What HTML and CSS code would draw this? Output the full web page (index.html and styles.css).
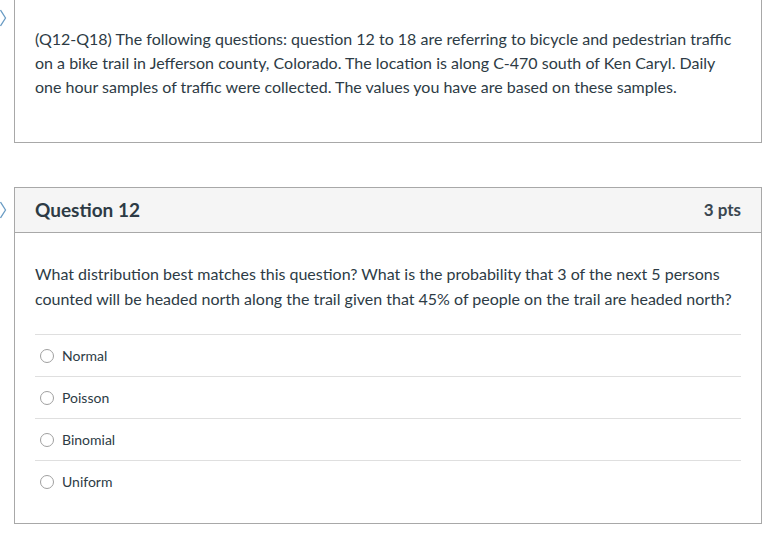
FILE: index.html
```html
<!DOCTYPE html>
<html>
<head>
<meta charset="utf-8">
<link rel="stylesheet" href="styles.css">
</head>
<body>
<div class="page">
  <div class="item">
    <svg class="chev chev-top" width="7" height="18" viewBox="0 0 7 18"><path d="M0.5 1 L5.5 9 L0.5 17" fill="none" stroke="#6a9cc4" stroke-width="1.3"/></svg>
    <div class="box box-intro">
      <p class="text">(Q12-Q18) The following questions: question 12 to 18 are referring to bicycle and pedestrian traffic on a bike trail in Jefferson county, Colorado. The location is along C-470 south of Ken Caryl. Daily one hour samples of traffic were collected. The values you have are based on these samples.</p>
    </div>
  </div>
  <div class="item item-q">
    <svg class="chev chev-q" width="7" height="18" viewBox="0 0 7 18"><path d="M0.5 1 L5.5 9 L0.5 17" fill="none" stroke="#6a9cc4" stroke-width="1.3"/></svg>
    <div class="box">
      <div class="header">
        <span class="qname">Question 12</span>
        <span class="pts">3 pts</span>
      </div>
      <div class="qbody">
        <p class="text qtext">What distribution best matches this question? What is the probability that 3 of the next 5 persons counted will be headed north along the trail given that 45% of people on the trail are headed north?</p>
        <div class="answers">
          <div class="answer"><span class="radio"></span><span class="label">Normal</span></div>
          <div class="answer"><span class="radio"></span><span class="label">Poisson</span></div>
          <div class="answer"><span class="radio"></span><span class="label">Binomial</span></div>
          <div class="answer"><span class="radio"></span><span class="label">Uniform</span></div>
        </div>
      </div>
    </div>
  </div>
</div>
</body>
</html>
```
FILE: styles.css
```css
html, body {
  margin: 0;
  padding: 0;
  background: #ffffff;
}
body {
  font-family: Lato, "Open Sans", sans-serif;
  color: #2d3b45;
}
.page {
  width: 748px;
  padding-left: 14px;
}
.item {
  position: relative;
}
.item-q {
  margin-top: 44px;
}
.chev {
  position: absolute;
  left: -14px;
  display: block;
}
.chev-top {
  top: 9px;
}
.chev-q {
  top: 14px;
}
.box {
  border: 1px solid #a8a8a8;
  background: #fff;
}
.box-intro {
  border-top: none;
  padding: 27px 20px 43px 20px;
}
.text {
  margin: 0;
  font-size: 16px;
  line-height: 24px;
}
.header {
  background: #f5f5f5;
  border-bottom: 1px solid #a8a8a8;
  height: 43px;
  padding: 0 20px 1px 20px;
  display: flex;
  align-items: center;
  justify-content: space-between;
  font-weight: bold;
  font-size: 19px;
}
.pts {
  font-size: 17px;
  color: #3a4650;
}
.qbody {
  padding: 28px 20px 21px 20px;
}
.qtext {
  line-height: 25px;
  margin-bottom: 23px;
}
.answers {
  border-top: 1px solid #dfdfdf;
}
.answer {
  height: 41px;
  display: flex;
  align-items: center;
  border-bottom: 1px solid #dfdfdf;
  font-size: 14px;
}
.answer:last-child {
  border-bottom: none;
}
.radio {
  width: 12px;
  height: 12px;
  border: 1px solid #a0a0a0;
  border-radius: 50%;
  margin-left: 5px;
  margin-right: 8px;
  background: #fff;
}
```
